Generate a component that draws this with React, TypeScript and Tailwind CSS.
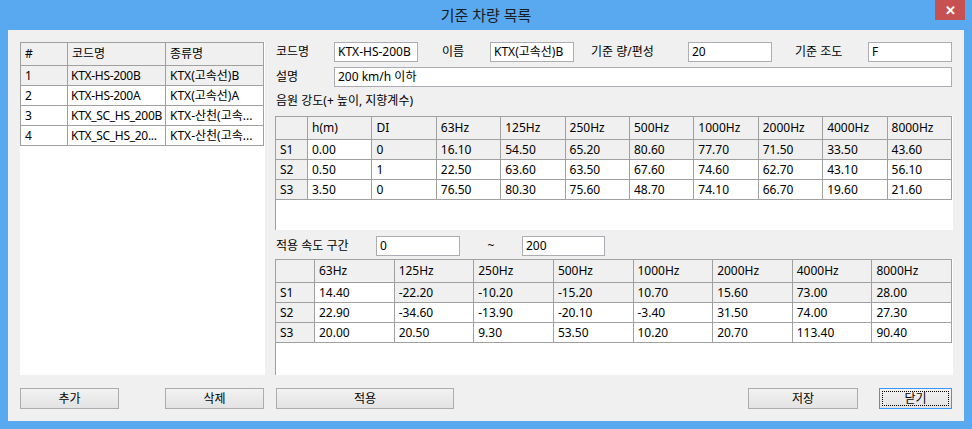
import React from 'react';

const font = "font-['Noto_Sans','Noto_Sans_CJK_KR',sans-serif]";

const vehicles = [
  ['1', 'KTX-HS-200B', 'KTX(고속선)B'],
  ['2', 'KTX-HS-200A', 'KTX(고속선)A'],
  ['3', 'KTX_SC_HS_200B', 'KTX-산천(고속...'],
  ['4', 'KTX_SC_HS_20...', 'KTX-산천(고속...'],
];

const sourceHead = ['', 'h(m)', 'DI', '63Hz', '125Hz', '250Hz', '500Hz', '1000Hz', '2000Hz', '4000Hz', '8000Hz'];
const sourceRows = [
  ['S1', '0.00', '0', '16.10', '54.50', '65.20', '80.60', '77.70', '71.50', '33.50', '43.60'],
  ['S2', '0.50', '1', '22.50', '63.60', '63.50', '67.60', '74.60', '62.70', '43.10', '56.10'],
  ['S3', '3.50', '0', '76.50', '80.30', '75.60', '48.70', '74.10', '66.70', '19.60', '21.60'],
];

const speedHead = ['', '63Hz', '125Hz', '250Hz', '500Hz', '1000Hz', '2000Hz', '4000Hz', '8000Hz'];
const speedRows = [
  ['S1', '14.40', '-22.20', '-10.20', '-15.20', '10.70', '15.60', '73.00', '28.00'],
  ['S2', '22.90', '-34.60', '-13.90', '-20.10', '-3.40', '31.50', '74.00', '27.30'],
  ['S3', '20.00', '20.50', '9.30', '53.50', '10.20', '20.70', '113.40', '90.40'],
];

const TextBox = ({ value, w }: { value: string; w: string }) => (
  <div className={`${w} h-[20px] bg-white border border-[#abadb3] px-[3px] flex items-center text-[12px] text-black whitespace-nowrap overflow-hidden`}>
    {value}
  </div>
);

const Btn = ({ label, w, ml, focused }: { label: string; w: string; ml: string; focused?: boolean }) => (
  <div
    className={`${w} ${ml} h-[21px] flex items-center justify-center text-[12px] text-black bg-gradient-to-b from-[#f2f2f2] to-[#e3e3e3] border ${
      focused ? 'border-[#3399ff]' : 'border-[#acacac]'
    } relative`}
  >
    {focused && <div className="absolute inset-[2px] border border-dotted border-black" />}
    {label}
  </div>
);

// grid view with gray row-header column and a selected first row
const Grid = ({
  head,
  rows,
  firstW,
  height,
}: {
  head: string[];
  rows: string[][];
  firstW: string;
  height: string;
}) => (
  <div className={`${height} bg-white border-l border-[#a0a0a0]`}>
    <table className="w-[677px] table-fixed border-collapse text-[12px] text-black -ml-px">
      <thead>
        <tr className="h-[23px]">
          {head.map((h, i) => (
            <th
              key={i}
              className={`${i === 0 ? firstW : ''} border border-[#a0a0a0] bg-[#f0f0f0] font-normal text-left pl-[4px] whitespace-nowrap`}
            >
              {h}
            </th>
          ))}
        </tr>
      </thead>
      <tbody>
        {rows.map((r, ri) => (
          <tr key={ri} className="h-[20px]">
            {r.map((c, ci) => (
              <td
                key={ci}
                className={`border border-[#a0a0a0] pl-[4px] py-0 leading-[18px] whitespace-nowrap overflow-hidden ${
                  ci === 0 || (ri === 0 && ci > 1) ? 'bg-[#f0f0f0]' : 'bg-white'
                }`}
              >
                {c}
              </td>
            ))}
          </tr>
        ))}
      </tbody>
    </table>
  </div>
);

export default function App() {
  return (
    <div className={`w-[972px] h-[429px] bg-[#58a9ef] flex flex-col ${font}`}>
      {/* title bar */}
      <div className="h-[30px] relative flex items-center justify-center text-[15px] text-[#1b1b1b]">
        기준 차량 목록
        <div className="absolute right-[7px] top-0 w-[30px] h-[20px] bg-[#c75050] flex items-center justify-center text-white text-[13px] font-bold leading-none">
          ✕
        </div>
      </div>

      {/* client area */}
      <div className="mx-[8px] h-[391px] bg-[#f0f0f0] flex flex-col pl-[12px] pr-[11px] pt-[12px]">
        <div className="flex h-[333px] gap-[10px]">
          {/* vehicle list */}
          <div className="w-[245px] h-full bg-white">
            <table className="w-[244px] table-fixed border-collapse text-[12px] text-black">
              <thead>
                <tr className="h-[23px]">
                  <th className="w-[47px] border border-[#a0a0a0] bg-[#f0f0f0] font-normal text-left pl-[4px]">#</th>
                  <th className="w-[98px] border border-[#a0a0a0] bg-[#f0f0f0] font-normal text-left pl-[4px]">코드명</th>
                  <th className="border border-[#a0a0a0] bg-[#f0f0f0] font-normal text-left pl-[4px]">종류명</th>
                </tr>
              </thead>
              <tbody>
                {vehicles.map((v, i) => (
                  <tr key={i} className={`h-[20px] ${i === 0 ? 'bg-[#f0f0f0]' : 'bg-white'}`}>
                    {v.map((c, ci) => (
                      <td
                        key={ci}
                        className={`border border-[#a0a0a0] leading-[18px] whitespace-nowrap overflow-hidden ${
                          ci === 1 ? 'pl-[3px] tracking-[-0.3px]' : 'pl-[4px]'
                        }`}
                      >
                        {c}
                      </td>
                    ))}
                  </tr>
                ))}
              </tbody>
            </table>
          </div>

          {/* details */}
          <div className="w-[678px] flex flex-col text-[12px] text-black">
            <div className="h-[20px] flex items-center">
              <span className="w-[59px] pl-[1px]">코드명</span>
              <TextBox value="KTX-HS-200B" w="w-[84px]" />
              <span className="w-[72px] pl-[24px]">이름</span>
              <TextBox value="KTX(고속선)B" w="w-[84px]" />
              <span className="w-[114px] pl-[17px]">기준 량/편성</span>
              <TextBox value="20" w="w-[84px]" />
              <span className="w-[96px] pl-[23px]">기준 조도</span>
              <TextBox value="F" w="w-[84px]" />
            </div>

            <div className="h-[20px] mt-[5px] flex items-center">
              <span className="w-[59px] pl-[1px]">설명</span>
              <TextBox value="200 km/h 이하" w="w-[618px]" />
            </div>

            <div className="h-[20px] mt-[4px] flex items-center pl-[1px]">음원 강도(+ 높이, 지향계수)</div>

            <div className="mt-[5px]">
              <Grid head={sourceHead} rows={sourceRows} firstW="w-[32px]" height="h-[114px]" />
            </div>

            <div className="h-[20px] mt-[6px] flex items-center">
              <span className="w-[101px] pl-[1px]">적용 속도 구간</span>
              <TextBox value="0" w="w-[84px]" />
              <span className="w-[62px] text-center">~</span>
              <TextBox value="200" w="w-[83px]" />
            </div>

            <div className="mt-[3px]">
              <Grid head={speedHead} rows={speedRows} firstW="w-[39px]" height="h-[116px]" />
            </div>
          </div>
        </div>

        {/* buttons */}
        <div className="flex mt-[13px]">
          <Btn label="추가" w="w-[99px]" ml="ml-0" />
          <Btn label="삭제" w="w-[99px]" ml="ml-[46px]" />
          <Btn label="적용" w="w-[178px]" ml="ml-[12px]" />
          <Btn label="저장" w="w-[110px]" ml="ml-[294px]" />
          <Btn label="닫기" w="w-[73px]" ml="ml-[21px]" focused />
        </div>
      </div>
    </div>
  );
}
